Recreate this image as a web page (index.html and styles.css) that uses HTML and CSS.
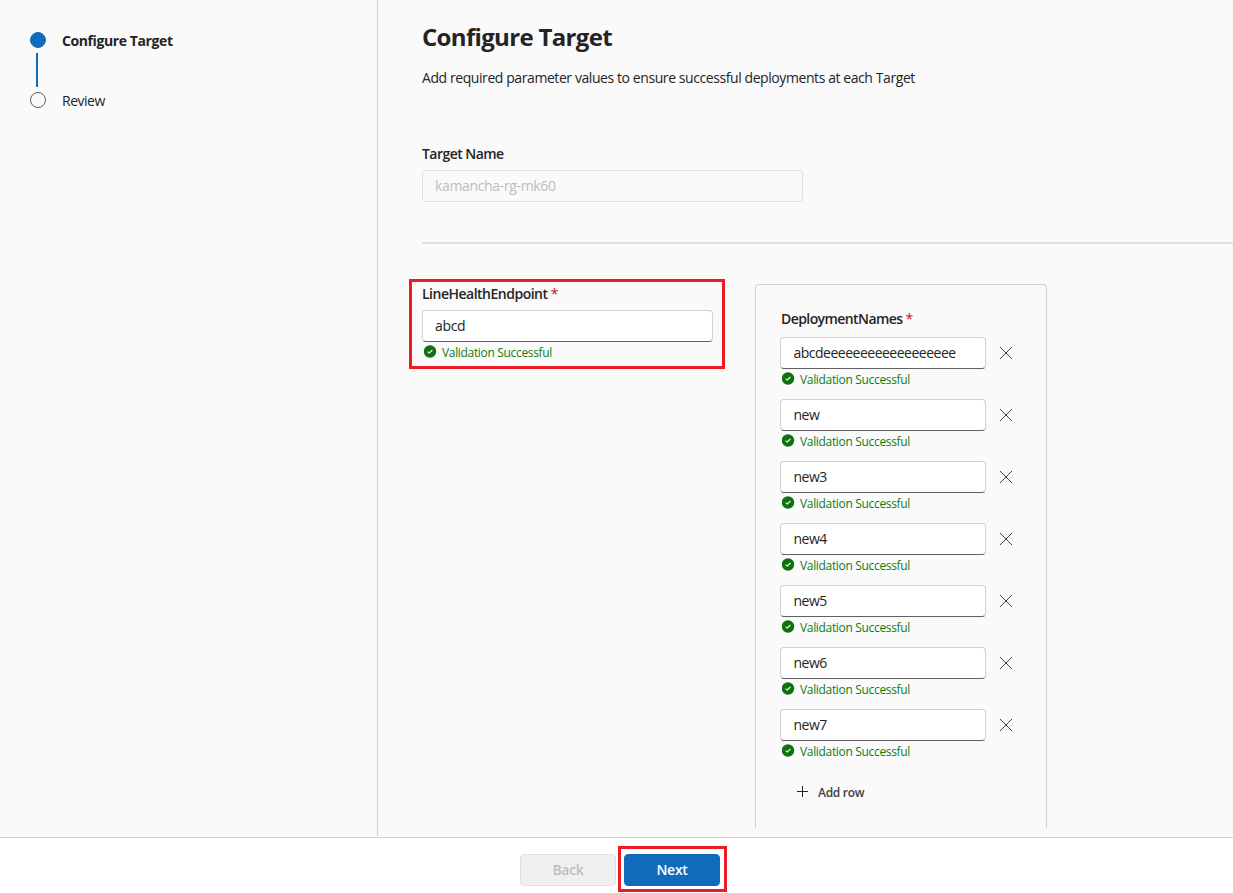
FILE: index.html
```html
<!DOCTYPE html>
<html lang="en">
<head>
<meta charset="utf-8">
<title>Configure Target</title>
<link rel="stylesheet" href="styles.css">
</head>
<body>
<svg class="sprite" width="0" height="0">
  <symbol id="check" viewBox="0 0 13 13"><circle cx="6" cy="6.5" r="6.2" fill="#0e700e"/><path d="M3.6 6.7 5.2 8.1 8.4 5" fill="none" stroke="#fff" stroke-width="1.1"/></symbol>
  <symbol id="cross" viewBox="0 0 14 14"><path d="M1 1 13 13M13 1 1 13" fill="none" stroke="#424242"/></symbol>
</svg>
<div class="workspace">
  <nav class="steps">
    <div class="step"><span class="dot dot-active"></span><span class="step-label step-current">Configure Target</span></div>
    <div class="connector"></div>
    <div class="step"><span class="dot"></span><span class="step-label">Review</span></div>
  </nav>
  <main class="content">
    <h1 class="title">Configure Target</h1>
    <p class="description">Add required parameter values to ensure successful deployments at each Target</p>
    <label class="label target-label" for="target">Target Name</label>
    <input class="input target-input" id="target" value="kamancha-rg-mk60" disabled>
    <div class="divider"></div>
    <div class="columns">
      <section class="endpoint">
        <label class="label endpoint-label" for="endpoint">LineHealthEndpoint <span class="required">*</span></label>
        <input class="input" id="endpoint" value="abcd">
        <div class="status"><svg class="check"><use href="#check"/></svg><span>Validation Successful</span></div>
      </section>
      <section class="panel">
        <div class="label names-label">DeploymentNames <span class="required">*</span></div>
        <div class="row"><input class="input" value="abcdeeeeeeeeeeeeeeeeee"><svg class="cross"><use href="#cross"/></svg></div>
        <div class="status"><svg class="check"><use href="#check"/></svg><span>Validation Successful</span></div>
        <div class="row"><input class="input" value="new"><svg class="cross"><use href="#cross"/></svg></div>
        <div class="status"><svg class="check"><use href="#check"/></svg><span>Validation Successful</span></div>
        <div class="row"><input class="input" value="new3"><svg class="cross"><use href="#cross"/></svg></div>
        <div class="status"><svg class="check"><use href="#check"/></svg><span>Validation Successful</span></div>
        <div class="row"><input class="input" value="new4"><svg class="cross"><use href="#cross"/></svg></div>
        <div class="status"><svg class="check"><use href="#check"/></svg><span>Validation Successful</span></div>
        <div class="row"><input class="input" value="new5"><svg class="cross"><use href="#cross"/></svg></div>
        <div class="status"><svg class="check"><use href="#check"/></svg><span>Validation Successful</span></div>
        <div class="row"><input class="input" value="new6"><svg class="cross"><use href="#cross"/></svg></div>
        <div class="status"><svg class="check"><use href="#check"/></svg><span>Validation Successful</span></div>
        <div class="row"><input class="input" value="new7"><svg class="cross"><use href="#cross"/></svg></div>
        <div class="status"><svg class="check"><use href="#check"/></svg><span>Validation Successful</span></div>
        <div class="add-row"><svg class="plus" viewBox="0 0 11 11"><path d="M5.5 0V11M0 5.5H11" stroke="#242424" fill="none"/></svg><span>Add row</span></div>
      </section>
    </div>
  </main>
</div>
<footer class="footer">
  <button class="button back" disabled>Back</button>
  <div class="next-wrap"><button class="button next">Next</button></div>
</footer>
</body>
</html>
```
FILE: styles.css
```css
*, *::after { box-sizing: border-box; }
body { margin: 0; height: 893px; overflow: hidden; display: flex; flex-direction: column; background: #fafafa; color: #242424; font: 14px/20px "Open Sans", "Noto Sans", sans-serif; }
.sprite { position: absolute; }
.workspace { height: 837px; display: flex; }
.steps { width: 378px; height: 836px; border-right: 1px solid #d1d1d1; padding: 30px 0 0 30px; }
.step { display: flex; align-items: center; gap: 16px; height: 20px; }
.dot { width: 16px; height: 16px; border: 1px solid #616161; border-radius: 50%; }
.dot-active { background: #0f6cbd; border-color: #0f6cbd; }
.connector { width: 2px; height: 34px; margin: 3px 0 3px 6px; background: #0f6cbd; }
.step-label { padding-top: 2px; letter-spacing: -0.5px; }
.step-current { font-weight: 700; letter-spacing: -0.4px; }
.content { flex: 1; padding: 21px 0 0 44px; }
.title { margin: 0; font-size: 24px; line-height: 32px; font-weight: 700; letter-spacing: -0.67px; }
.description { margin: 15px 0 56px; letter-spacing: -0.42px; }
.label { display: block; height: 20px; font-weight: 600; letter-spacing: -0.5px; white-space: nowrap; }
.target-label { letter-spacing: -0.55px; }
.required { color: #c50f1f; font-weight: 400; }
.input { display: block; width: 100%; height: 32px; padding: 0 12px 2px; border: 1px solid #d1d1d1; border-bottom-color: #616161; border-radius: 4px; background: #fff; color: #242424; font: inherit; letter-spacing: -0.35px; outline: 0; }
.target-input { width: 381px; margin-top: 6px; border-color: #e0e0e0; background: transparent; color: #bdbdbd; }
.divider { height: 2px; margin-top: 40px; background: #e0e0e0; }
.columns { display: flex; align-items: flex-start; gap: 30px; margin: 35px 0 0 -13px; }
.endpoint { width: 316px; height: 90px; border: 3px solid #ed1c24; padding: 2px 9px 0 10px; }
.endpoint-label { margin-bottom: 6px; }
.status { display: flex; align-items: center; gap: 5px; height: 20px; margin-bottom: 10px; padding-left: 2px; color: #107c10; font-size: 12px; letter-spacing: -0.33px; }
.check { width: 13px; height: 13px; flex: none; margin-top: -1px; overflow: visible; }
.status span { padding-top: 1px; }
.panel { width: 292px; height: 544px; margin-top: 5px; border: 1px solid #d1d1d1; border-bottom: 0; border-radius: 4px 4px 0 0; padding: 24px; }
.names-label { margin-bottom: 8px; padding-left: 1px; letter-spacing: -0.58px; }
.row { display: flex; align-items: center; gap: 13px; }
.row .input { width: 206px; padding-left: 12.5px; letter-spacing: -0.5px; }
.cross { width: 14px; height: 14px; }
.add-row { display: flex; align-items: center; gap: 10px; height: 20px; margin: 21px 0 0 17px; color: #424242; font-size: 12px; font-weight: 600; letter-spacing: -0.3px; }
.add-row span { padding-top: 2px; }
.plus { width: 11px; height: 11px; margin-top: -1px; }
.footer { height: 56px; display: flex; justify-content: flex-start; gap: 8px; padding: 16px 0 0 520px; border-top: 1px solid #d1d1d1; background: #fff; }
.button { display: block; width: 96px; height: 32px; padding: 0; border: 1px solid #e0e0e0; border-radius: 4px; font: 600 14px/20px "Open Sans", "Noto Sans", sans-serif; letter-spacing: -0.3px; }
.back { background: #f0f0f0; color: #bdbdbd; }
.next { background: #0f6cbd; border-color: #0f6cbd; color: #fff; }
.next-wrap { position: relative; }
.next-wrap::after { content: ""; position: absolute; top: -8px; left: -6px; width: 109px; height: 46px; border: 3px solid #ed1c24; }
```
